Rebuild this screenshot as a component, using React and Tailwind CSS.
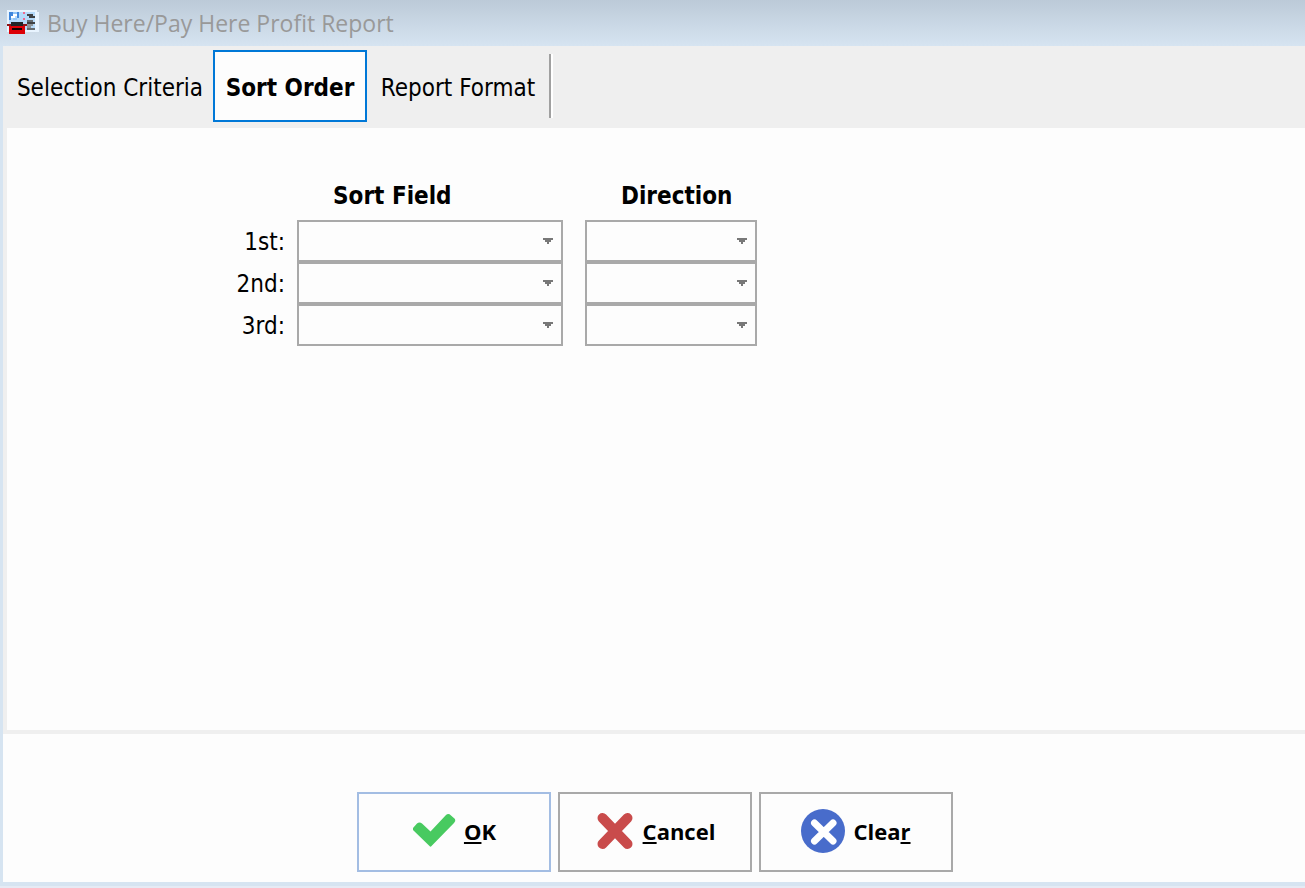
import { useState } from "react";

const TABS = ["Selection Criteria", "Sort Order", "Report Format"];
const ROWS = ["1st", "2nd", "3rd"];
const FIELDS = ["", "Stock Number", "Customer Name", "Date Sold", "Profit"];
const DIRECTIONS = ["", "Ascending", "Descending"];

function AppIcon() {
  return (
    <svg className="h-6 w-8 shrink-0" viewBox="0 0 32 24" shapeRendering="crispEdges" aria-hidden="true">
      <path fill="#e8f4ff" d="M0 0h30v2h2v20H0z" />
      <path fill="#b5dafa" d="M2 2h26v18H2z" />
      <path fill="#3f86dc" d="M2 2h8v2H6v2H4v4H2z" />
      <path fill="#8fc4f8" d="M6 2h4v2H6zM6 8h4v2H6z" />
      <path fill="#fff" d="M6 4h4v2H8v2H4V6h2z" />
      <path fill="#3f86dc" d="M10 2h2v6h-2z" />
      <path fill="#f06a90" d="M16 2h2v2h-2zM16 8h2v2h-2z" />
      <path fill="#3f4245" d="M20 4h6v2h2v2h-6V6h-2zM20 12h8v2h-8z" />
      <path fill="#656b70" d="M20 10h6v2h-6zM20 18h8v2h-8z" />
      <path fill="#8d9499" d="M18 14h8v2h-8zM20 16h4v2h-4z" />
      <path fill="#212528" d="M4 12h12v2h3v2H3v-2h1z" />
      <path fill="#8c1518" d="M0 14h4v2H0zM16 14h4v2h-4z" />
      <path fill="#dc0006" d="M2 16h16v8H2z" />
      <path fill="#150203" d="M5 18h10v2H5z" />
    </svg>
  );
}

function CheckIcon() {
  return (
    <svg className="h-9 w-11 shrink-0" viewBox="0 0 44 36" aria-hidden="true">
      <path d="M1 15 L5 10.500 Q7.500 8.500 10 10.500 L18.500 18.500 L34 2 Q36.500 0 39 2.500 L43 6 Q44 8 42 10 L19.500 33 Q18.500 34.500 17.500 33 L1 17 Z" fill="#48ca60" />
    </svg>
  );
}

function CrossIcon() {
  return (
    <svg className="h-[38px] w-10 shrink-0" viewBox="0 0 40 38" aria-hidden="true">
      <path d="M7.500 6 L32.500 32 M32.500 6 L7.500 32" stroke="#c94b4b" strokeWidth="10" strokeLinecap="round" />
    </svg>
  );
}

function ClearIcon() {
  return (
    <svg className="size-11 shrink-0" viewBox="0 0 44 44" aria-hidden="true">
      <circle cx="22" cy="22" r="22" fill="#486ccb" />
      <path d="M13.500 14 L32 32 M32 14 L13.500 32" stroke="#fff" strokeWidth="7" strokeLinecap="round" />
    </svg>
  );
}

function DropDown({ label, options, className }) {
  return (
    <div className={`relative ${className}`}>
      <select aria-label={label} className="block h-[42px] w-full appearance-none border-2 border-[#a9a9a9] bg-[#fdfdfd] pr-8 pl-2">
        {options.map((option) => (
          <option key={option}>{option}</option>
        ))}
      </select>
      <svg className="pointer-events-none absolute top-[18px] right-2.5 h-1.5 w-2.5" viewBox="0 0 10 6" shapeRendering="crispEdges" aria-hidden="true">
        <path fill="#787878" d="M0 0h10v2H8v2H6v2H4V4H2V2H0z" />
      </svg>
    </div>
  );
}

function ActionButton({ icon, primary, children }) {
  return (
    <button
      type="button"
      className={`flex h-20 w-[194px] items-center justify-center gap-2 border-2 bg-[#fdfdfd] pb-[3px] font-['Open_Sans','Noto_Sans',sans-serif] text-[22px] leading-8 font-bold ${primary ? "border-[#a3bde3]" : "border-[#a9a9a9]"}`}
    >
      {icon}
      <span>{children}</span>
    </button>
  );
}

export default function App() {
  const [active, setActive] = useState("Sort Order");

  return (
    <div className="flex min-h-screen flex-col border-b-2 border-[#e6eaf4] bg-[#d6e4f1] pb-1 font-['DejaVu_Sans_Condensed','DejaVu_Sans',sans-serif] text-[24px] leading-8 text-black">
      <header className="flex h-[46px] items-center gap-2 bg-linear-to-b from-[#bccad8] to-[#d6e4f1] pb-0.5 pl-[7px]">
        <AppIcon />
        <h1 className="pt-0.5 font-['Open_Sans','Noto_Sans',sans-serif] text-[23px] leading-8 text-[#999]">Buy Here/Pay Here Profit Report</h1>
      </header>

      <div className="ml-[3px] flex grow flex-col bg-[#efefef]">
        <div role="tablist" className="grid h-[82px] grid-cols-[206px_154px_182px_4px] items-start pt-1 pl-1">
          {TABS.map((tab) => (
            <button
              key={tab}
              type="button"
              role="tab"
              aria-selected={tab === active}
              onClick={() => setActive(tab)}
              className={`h-[72px] border-2 pt-[3px] whitespace-nowrap ${tab === active ? "border-[#0078d7] bg-[#fdfdfd] font-bold" : "border-transparent"}`}
            >
              {tab}
            </button>
          ))}
          <div className="mt-1 h-16 border-r-2 border-l-2 border-r-white border-l-[#a0a0a0]" />
        </div>

        <main role="tabpanel" aria-label={active} className="ml-1 grow bg-[#fdfdfd] pt-[52px] pl-[200px]">
          <div className="grid grid-cols-[90px_266px_22px_172px] items-center">
            <h2 className="col-start-2 mb-2 pl-9 font-bold">Sort Field</h2>
            <h2 className="col-start-4 mb-2 pl-9 font-bold">Direction</h2>
            {ROWS.map((row) => (
              <div key={row} className="contents">
                <span className="col-start-1 pt-0.5 pr-3 text-right">{row}:</span>
                <DropDown label={`${row} sort field`} options={FIELDS} className="col-start-2" />
                <DropDown label={`${row} direction`} options={DIRECTIONS} className="col-start-4" />
              </div>
            ))}
          </div>
        </main>
        <footer className="mt-1 flex gap-[7px] bg-[#fdfdfd] pt-[58px] pb-2.5 pl-[354px]">
          <ActionButton primary icon={<CheckIcon />}>
            <u>O</u>K
          </ActionButton>
          <ActionButton icon={<CrossIcon />}>
            <u>C</u>ancel
          </ActionButton>
          <ActionButton icon={<ClearIcon />}>
            Clea<u>r</u>
          </ActionButton>
        </footer>
      </div>
    </div>
  );
}
